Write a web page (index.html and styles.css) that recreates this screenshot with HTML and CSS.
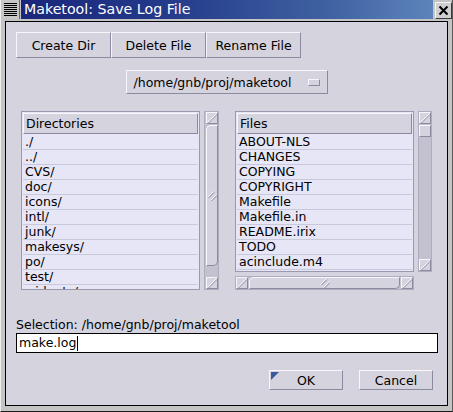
FILE: index.html
```html
<!DOCTYPE html>
<html>
<head>
<meta charset="utf-8">
<link rel="stylesheet" href="styles.css">
</head>
<body>
<div class="window">
  <div class="titlebar">
    <div class="menu-btn"><div class="menu-lines"></div></div>
    <div class="title">Maketool: Save Log File</div>
    <div class="close-btn">
      <svg width="15" height="15" viewBox="0 0 15 15"><path d="M3.5 3.5 L11.5 11.5 M11.5 3.5 L3.5 11.5" stroke="#000" stroke-width="2"/></svg>
    </div>
  </div>
  <div class="frame">
    <div class="client">
      <div class="toolbar">
        <div class="btn tool">Create Dir</div>
        <div class="btn tool">Delete File</div>
        <div class="btn tool">Rename File</div>
      </div>
      <div class="combo-row">
        <div class="combo"><span>/home/gnb/proj/maketool</span><span class="combo-ind"></span></div>
      </div>
      <div class="panes">
        <div class="pane pane-dirs">
          <div class="list">
            <div class="list-head">Directories</div>
            <div class="row">./</div>
            <div class="row">../</div>
            <div class="row">CVS/</div>
            <div class="row">doc/</div>
            <div class="row">icons/</div>
            <div class="row">intl/</div>
            <div class="row">junk/</div>
            <div class="row">makesys/</div>
            <div class="row">po/</div>
            <div class="row">test/</div>
            <div class="row">widgets/</div>
          </div>
          <div class="vscroll">
            <div class="sb-btn"><svg width="10" height="10" viewBox="0 0 10 10"><path d="M0.5 9.5 L9.5 0.5" stroke="#f6f6fb" stroke-width="1"/><path d="M1.5 10 L10 1.5" stroke="#9896aa" stroke-width="1"/></svg></div>
            <div class="sb-thumb dirs-thumb"><svg width="10" height="10" viewBox="0 0 10 10"><path d="M0.5 6.5 L6.5 0.5 M3.5 9.5 L9.5 3.5" stroke="#f6f6fb" stroke-width="1"/><path d="M1.5 7 L7 1.5 M4.5 10 L10 4.5" stroke="#8c8aa0" stroke-width="1"/></svg></div>
            <div class="sb-trough"></div>
            <div class="sb-btn"><svg width="10" height="10" viewBox="0 0 10 10"><path d="M0.5 9.5 L9.5 0.5" stroke="#f6f6fb" stroke-width="1"/><path d="M1.5 10 L10 1.5" stroke="#9896aa" stroke-width="1"/></svg></div>
          </div>
        </div>
        <div class="pane pane-files">
          <div class="files-top">
            <div class="list">
              <div class="list-head">Files</div>
              <div class="row">ABOUT-NLS</div>
              <div class="row">CHANGES</div>
              <div class="row">COPYING</div>
              <div class="row">COPYRIGHT</div>
              <div class="row">Makefile</div>
              <div class="row">Makefile.in</div>
              <div class="row">README.irix</div>
              <div class="row">TODO</div>
              <div class="row">acinclude.m4</div>
            </div>
            <div class="vscroll narrow">
              <div class="sb-btn"><svg width="10" height="10" viewBox="0 0 10 10"><path d="M0.5 9.5 L9.5 0.5" stroke="#f6f6fb" stroke-width="1"/><path d="M1.5 10 L10 1.5" stroke="#9896aa" stroke-width="1"/></svg></div>
              <div class="sb-thumb files-thumb"></div>
              <div class="sb-trough"></div>
              <div class="sb-btn"><svg width="10" height="10" viewBox="0 0 10 10"><path d="M0.5 9.5 L9.5 0.5" stroke="#f6f6fb" stroke-width="1"/><path d="M1.5 10 L10 1.5" stroke="#9896aa" stroke-width="1"/></svg></div>
            </div>
          </div>
          <div class="hscroll">
            <div class="sb-btn"><svg width="10" height="10" viewBox="0 0 10 10"><path d="M0.5 9.5 L9.5 0.5" stroke="#f6f6fb" stroke-width="1"/><path d="M1.5 10 L10 1.5" stroke="#9896aa" stroke-width="1"/></svg></div>
            <div class="sb-thumb h-thumb"><svg width="10" height="10" viewBox="0 0 10 10"><path d="M0.5 6.5 L6.5 0.5 M3.5 9.5 L9.5 3.5" stroke="#f6f6fb" stroke-width="1"/><path d="M1.5 7 L7 1.5 M4.5 10 L10 4.5" stroke="#8c8aa0" stroke-width="1"/></svg></div>
            <div class="sb-btn"><svg width="10" height="10" viewBox="0 0 10 10"><path d="M0.5 9.5 L9.5 0.5" stroke="#f6f6fb" stroke-width="1"/><path d="M1.5 10 L10 1.5" stroke="#9896aa" stroke-width="1"/></svg></div>
          </div>
        </div>
      </div>
      <div class="sel-label">Selection: /home/gnb/proj/maketool</div>
      <div class="entry">make.log<span class="caret"></span></div>
      <div class="actions">
        <div class="btn action default">OK</div>
        <div class="btn action">Cancel</div>
      </div>
    </div>
  </div>
</div>
</body>
</html>
```
FILE: styles.css
```css
* { box-sizing: border-box; }
html, body { margin: 0; padding: 0; }
body {
  width: 453px;
  height: 412px;
  overflow: hidden;
  font-family: "DejaVu Sans", sans-serif;
  font-size: 12.5px;
  color: #000;
  background: #c6c6c6;
}
.window {
  width: 453px;
  height: 412px;
  display: flex;
  flex-direction: column;
  background: #c4c4c4;
  border-left: 1px solid #eeeeee;
  border-right: 1px solid #5a5a5a;
  border-bottom: 1px solid #1a1a1a;
}
.titlebar {
  height: 19px;
  display: flex;
  flex-shrink: 0;
}
.menu-btn {
  width: 19px;
  height: 19px;
  background: #c8c8c8;
  border-right: 1px solid #6a6a6a;
  padding: 3px 0 0 3px;
}
.menu-lines {
  width: 13px;
  height: 14px;
  background: repeating-linear-gradient(to bottom, #000 0 1px, transparent 1px 2px);
}
.title {
  flex: 1;
  margin-left: 1px;
  background: linear-gradient(to right, #1a2679 0%, #243a8a 35%, #3f62a2 75%, #5e84bb 100%);
  color: #fff;
  font-size: 14.2px;
  line-height: 19px;
  padding-left: 3px;
  white-space: nowrap;
  overflow: hidden;
}
.close-btn {
  width: 17px;
  height: 17px;
  margin: 2px 0 0 2px;
  background: #cfcfcf;
  border: 1px solid;
  border-color: #f4f4f4 #3a3a3a #3a3a3a #f4f4f4;
  display: flex;
  align-items: center;
  justify-content: center;
}
.close-btn svg { display: block; }
.frame {
  flex: 1;
  display: flex;
  padding: 2px 4px 5px 4px;
}
.client {
  flex: 1;
  border: 1px solid #000;
  background: #d5d3de;
  display: flex;
  flex-direction: column;
  padding-top: 10px;
}
.btn {
  border: 1px solid;
  border-color: #f6f6fb #8c8aa0 #8c8aa0 #f6f6fb;
  background: #d5d3de;
  display: flex;
  align-items: center;
  justify-content: center;
  white-space: nowrap;
}
.toolbar {
  display: flex;
  padding-left: 10px;
}
.tool {
  width: 95px;
  height: 26px;
}
.combo-row {
  display: flex;
  justify-content: center;
  margin-top: 12px;
}
.combo {
  width: 202px;
  height: 24px;
  border: 1px solid;
  border-color: #f6f6fb #8c8aa0 #8c8aa0 #f6f6fb;
  display: flex;
  align-items: center;
  padding: 0 7px 0 7px;
  white-space: nowrap;
}
.combo-ind {
  margin-left: auto;
  width: 12px;
  height: 7px;
  border: 1px solid;
  border-color: #f6f6fb #8c8aa0 #8c8aa0 #f6f6fb;
}
.panes {
  display: grid;
  grid-template-columns: 198px 197px;
  column-gap: 16px;
  padding: 0 15px;
  margin-top: 17px;
  height: 179px;
}
.pane-dirs {
  display: flex;
  gap: 4px;
  height: 179px;
}
.pane-files {
  display: flex;
  flex-direction: column;
  gap: 4px;
  height: 179px;
}
.files-top {
  display: flex;
  gap: 4px;
  height: 161px;
}
.list {
  width: 179px;
  flex-shrink: 0;
  border: 1px solid #9a98ae;
  background: #e6e6f6;
  padding: 1px;
  display: flex;
  flex-direction: column;
  overflow: hidden;
}
.list-head {
  height: 21px;
  flex-shrink: 0;
  border: 1px solid;
  border-color: #f6f6fb #8c8aa0 #8c8aa0 #f6f6fb;
  background: #d5d3de;
  padding-left: 2px;
  line-height: 19px;
  margin-bottom: 1px;
}
.row {
  height: 15px;
  flex-shrink: 0;
  border-bottom: 1px solid #c9c9dc;
  padding-left: 2px;
  line-height: 14px;
  white-space: nowrap;
}
.vscroll {
  width: 15px;
  flex-shrink: 0;
  border: 1px solid #aeacbf;
  background: #c3c1cf;
  display: flex;
  flex-direction: column;
  align-items: center;
}
.vscroll.narrow { width: 14px; }
.sb-btn {
  width: 12px;
  height: 12px;
  flex-shrink: 0;
  border: 1px solid;
  border-color: #f6f6fb #8c8aa0 #8c8aa0 #f6f6fb;
  background: #d5d3de;
  display: flex;
  align-items: center;
  justify-content: center;
}
.sb-btn svg, .sb-thumb svg { display: block; }
.sb-thumb {
  flex-shrink: 0;
  border: 1px solid;
  border-color: #f6f6fb #8c8aa0 #8c8aa0 #f6f6fb;
  background: #d5d3de;
  display: flex;
  align-items: center;
  justify-content: center;
}
.dirs-thumb {
  width: 12px;
  height: 141px;
  margin-top: 1px;
  border-radius: 5px 1px 5px 1px;
}
.files-thumb {
  width: 12px;
  height: 12px;
  margin-top: 1px;
}
.sb-trough { flex: 1; }
.hscroll {
  width: 179px;
  height: 14px;
  border: 1px solid #aeacbf;
  background: #c3c1cf;
  display: flex;
  align-items: center;
  gap: 1px;
}
.h-thumb {
  flex: 1;
  height: 12px;
  border-radius: 5px 1px 5px 1px;
}
.sel-label {
  margin-top: 27px;
  height: 16px;
  line-height: 15px;
  padding-left: 10px;
  white-space: nowrap;
}
.entry {
  margin: 0 9px 0 10px;
  height: 20px;
  border: 1px solid #000;
  background: #fff;
  padding-left: 2px;
  line-height: 18px;
  display: flex;
  align-items: center;
}
.caret {
  width: 1px;
  height: 15px;
  background: #000;
  margin-left: 1px;
}
.actions {
  display: flex;
  justify-content: flex-end;
  gap: 16px;
  padding-right: 14px;
  margin-top: 17px;
}
.action {
  width: 74px;
  height: 20px;
}
.default { position: relative; }
.default::before {
  content: "";
  position: absolute;
  left: 1px;
  top: 1px;
  width: 0;
  height: 0;
  border-top: 8px solid #3a5a9a;
  border-right: 8px solid transparent;
}
```
